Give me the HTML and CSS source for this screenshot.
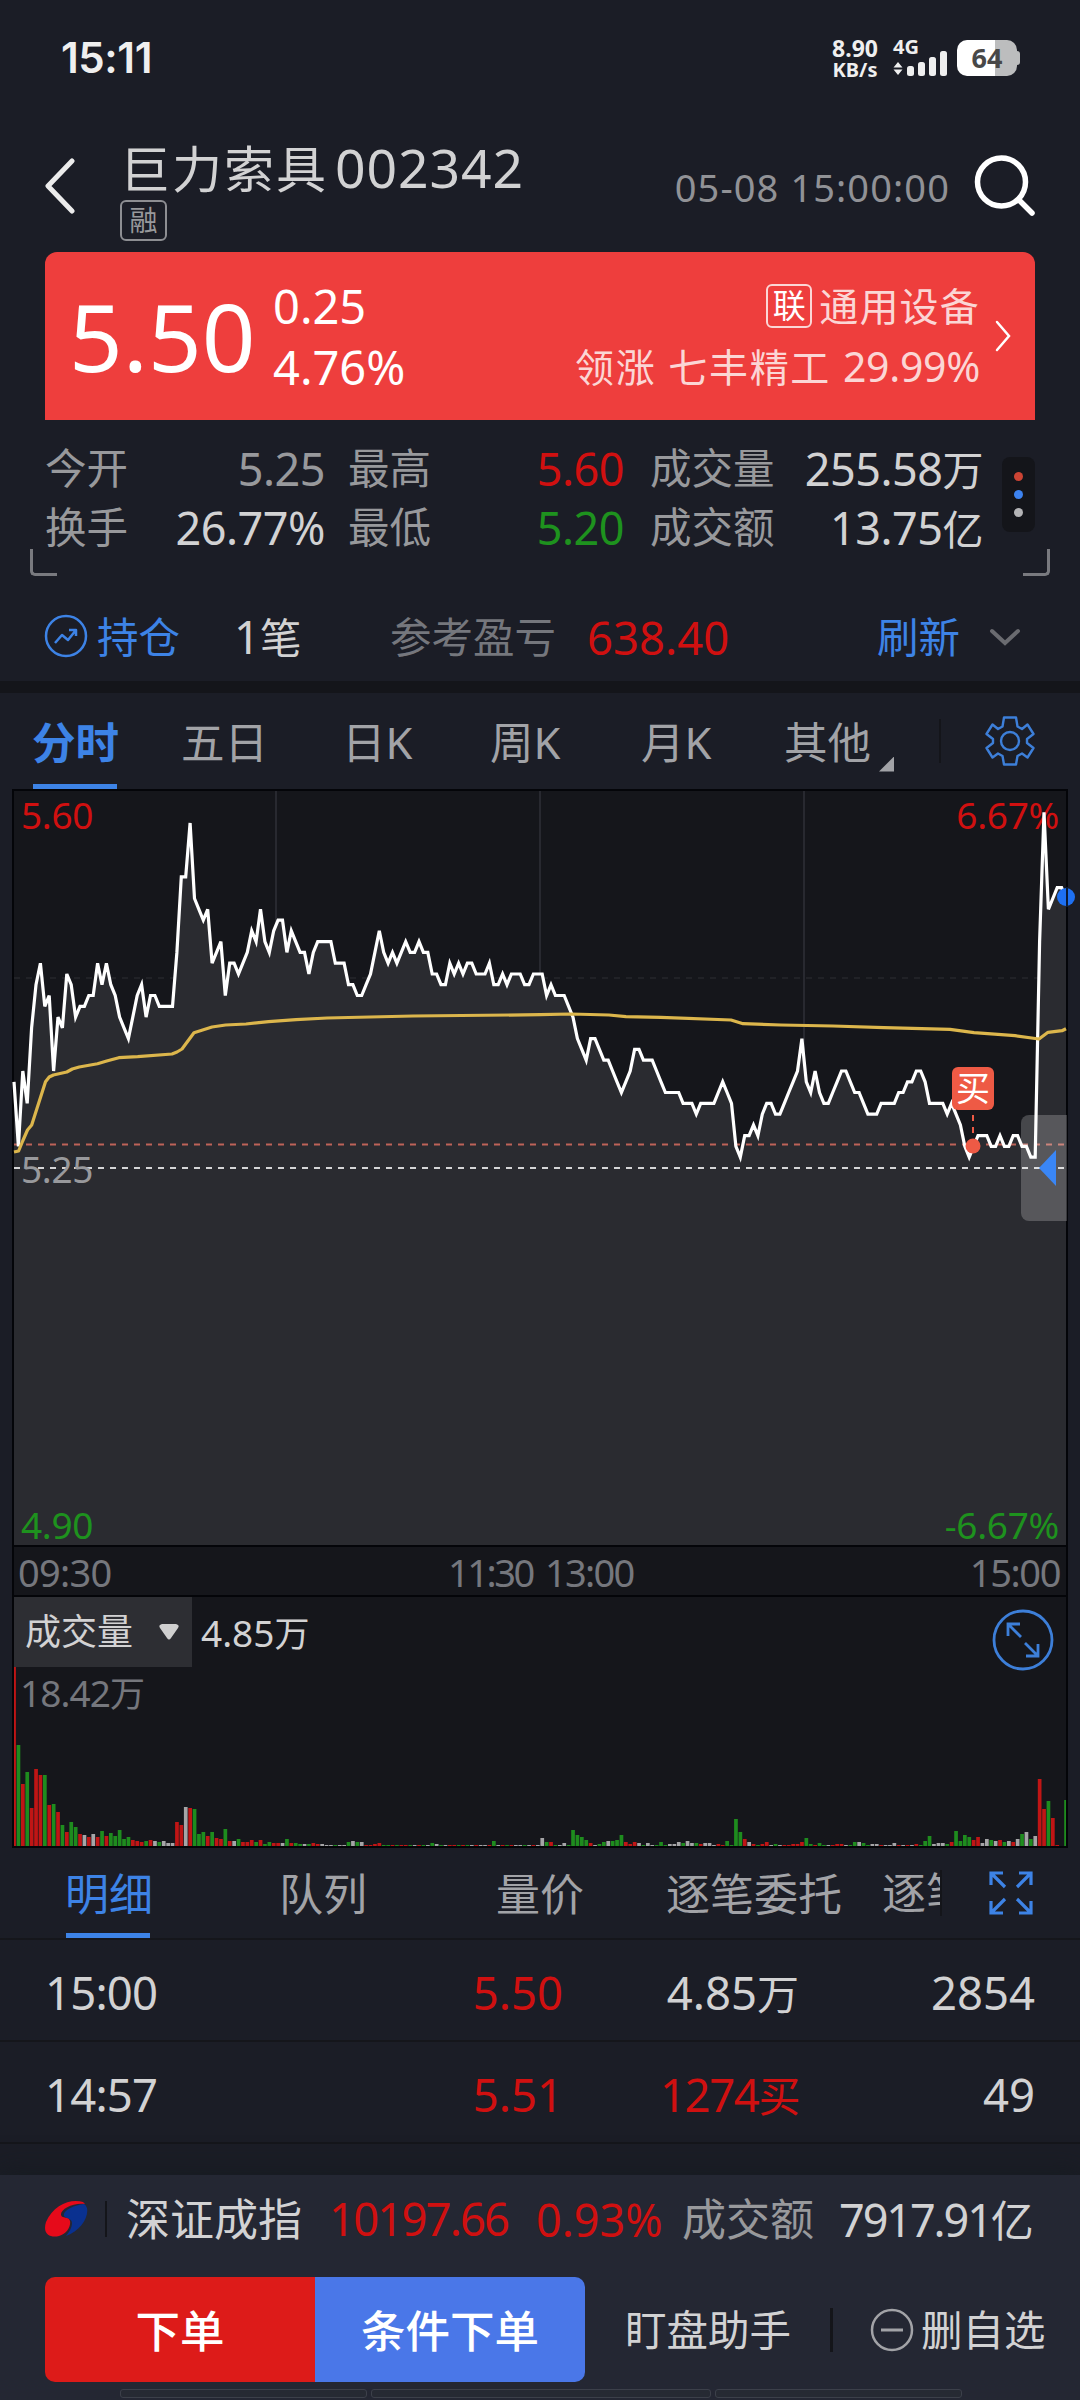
FILE: index.html
```html
<!DOCTYPE html>
<html lang="zh-CN">
<head>
  <meta charset="utf-8">
  <title>巨力索具 002342</title>
  <link rel="stylesheet" href="styles.css">
</head>
<body>
  <div class="statusbar">
    <span class="clock">15:11</span>
    <div class="speed"><span>8.90</span><span class="unit">KB/s</span></div>
    <div class="signal">
      <span>4G</span>
      <svg width="56" height="26" viewBox="0 0 56 26" fill="#efefef">
        <path d="M5 12l4.500 5.500h-9zM5 25l4.500-5.500h-9z"/>
        <rect x="14" y="16" width="7" height="10" rx="2.500"/>
        <rect x="25" y="12" width="7" height="14" rx="2.500"/>
        <rect x="36" y="7" width="7" height="19" rx="2.500"/>
        <rect x="47" y="1" width="7" height="25" rx="2.500"/>
      </svg>
    </div>
    <div class="battery"><span>64</span></div>
  </div>

  <div class="header">
    <svg class="back" width="32" height="56" viewBox="0 0 32 56"><path d="M28 3L4 28l24 25" fill="none" stroke="#ececec" stroke-width="5" stroke-linecap="round" stroke-linejoin="round"/></svg>
    <div class="name">
      <div class="title">巨力索具<span class="code">002342</span></div>
      <span class="tag">融</span>
    </div>
    <span class="date">05-08 15:00:00</span>
    <svg class="search" width="62" height="62" viewBox="0 0 62 62" fill="none" stroke="#fff" stroke-width="5.500" stroke-linecap="round"><circle cx="27.500" cy="27" r="24"/><path d="M45 45l13 13"/></svg>
  </div>

  <div class="quote">
    <span class="price">5.50</span>
    <div class="change"><span>0.25</span><span>4.76%</span></div>
    <div class="sector">
      <div class="sector-name"><span class="lian">联</span>通用设备</div>
      <div class="leader">领涨 七丰精工 <span class="pct">29.99%</span></div>
    </div>
    <svg class="go" width="20" height="34" viewBox="0 0 20 34"><path d="M4 3l12 14L4 31" fill="none" stroke="#fff" stroke-width="2.500" stroke-linecap="round"/></svg>
  </div>

  <div class="stats">
    <div class="stats-grid">
      <span>今开</span><b class="num gray">5.25</b><span>最高</span><b class="num red">5.60</b><span>成交量</span><b class="num">255.58<i>万</i></b>
      <span>换手</span><b class="num">26.77%</b><span>最低</span><b class="num green">5.20</b><span>成交额</span><b class="num">13.75<i>亿</i></b>
    </div>
    <div class="more"><i class="dot d1"></i><i class="dot d2"></i><i class="dot d3"></i></div>
    <i class="corner left"></i><i class="corner right"></i>
  </div>

  <div class="position">
    <svg class="pos-icon" width="44" height="44" viewBox="0 0 44 44" fill="none" stroke="#3d83e6" stroke-width="2.500"><circle cx="22" cy="22" r="20"/><path d="M11 29l7-8 6 5 8-10M25 16h7v6" stroke-linejoin="round"/></svg>
    <span class="hold">持仓</span>
    <span class="count"><em>1</em>笔</span>
    <span class="profit-label">参考盈亏</span>
    <span class="profit">638.40</span>
    <span class="refresh">刷新</span>
    <svg class="down" width="34" height="20" viewBox="0 0 34 20"><path d="M4 4l13 12L30 4" fill="none" stroke="#6a6b70" stroke-width="4" stroke-linecap="round"/></svg>
  </div>

  <div class="tabs">
    <span class="tab active">分时</span>
    <span class="tab">五日</span>
    <span class="tab">日K</span>
    <span class="tab">周K</span>
    <span class="tab">月K</span>
    <span class="tab other">其他</span>
    <i class="triangle"></i>
    <i class="vline"></i>
    <svg class="gear" width="52" height="52" viewBox="-26 -26 52 52" fill="none" stroke="#3d7fd9" stroke-width="2.400" stroke-linejoin="round">
      <path d="M-6-23.500H6L7.500-14.500L12-12L17.500-16.500L23.500-7L17-2V2L23.500 7L17.500 16.500L12 12.500L7.500 15L6 23.500H-6L-7.500 15L-12 12.500L-17.500 16.500L-23.500 7L-17 2V-2L-23.500-7L-17.500-16.500L-12-12L-7.500-14.500Z"/>
      <circle r="9"/>
    </svg>
  </div>

  <div class="chart">
    <svg id="priceChart" width="1052" height="754" viewBox="0 0 1052 754">
      <path d="M262 0V754M526 0V754M790 0V754" stroke="#2f3038" stroke-width="1.500"/>
      <path d="M0 187H1052" stroke="#26272c" stroke-width="1.500" stroke-dasharray="6 6"/>
      <path id="priceArea" fill="#2a2b30"/>
      <path d="M0 353.500H1052" stroke="#bd6358" stroke-width="1.800" stroke-dasharray="6 6"/>
      <path d="M0 377H1052" stroke="#d5d5d7" stroke-width="2" stroke-dasharray="6 6"/>
    </svg>
    <span class="mark top-left red">5.60</span>
    <span class="mark top-right red">6.67%</span>
    <span class="mark middle">5.25</span>
    <span class="mark bottom-left green">4.90</span>
    <span class="mark bottom-right green">-6.67%</span>
    <svg class="lines" width="1052" height="754" viewBox="0 0 1052 754" fill="none">
      <path id="priceLine" stroke="#fff" stroke-width="3.200"/>
      <path stroke="#dcb64c" stroke-width="3.200" stroke-linejoin="round" d="M0 361L4.600 360L8.700 350L13.500 339L17.700 334L31.500 290.700L35.200 286L39.400 284L52.800 281L58.300 278L65.200 276L83.500 272.700L92.700 270L104.800 266.700L123.700 265.700L158 263L163 261L168 258L180 241.700L198 236L211.600 234L232 233L254.600 230.700L282 228.700L313 227L399 225L526 223.700L557 223L595 224L612 225.700L646.500 226.300L717 229L729 232.700L767 234L819 235L870 236.700L936 238.300L960 241.700L1001 244.700L1025 248L1034 241.300L1048 239.700L1052 237.700"/>
      <path d="M959 324v22" stroke="#ee5a45" stroke-width="2" stroke-dasharray="6 6"/>
      <circle cx="959" cy="355" r="7.500" fill="#ee5a45"/>
      <circle cx="1052" cy="106" r="9" fill="#1e70f2"/>
      <path d="M1053 96v20" stroke="#0a1a35" stroke-width="2"/>
    </svg>
    <span class="buy">买</span>
    <div class="drawer"><i></i></div>
  </div>

  <div class="times">
    <span class="t1">09:30</span>
    <span class="t2">11:30</span>
    <span class="t3">13:00</span>
    <span class="t4">15:00</span>
  </div>

  <div class="volume">
    <div class="vol-head">
      <div class="vol-select">成交量<svg width="22" height="18" viewBox="0 0 22 18"><path d="M4 1h14q4 1 2 4l-7 10q-2 3-4 0L2 5Q0 2 4 1z" fill="#d0d0d0"/></svg></div>
      <span class="vol-now">4.85<i>万</i></span>
    </div>
    <span class="vol-max">18.42<i>万</i></span>
    <svg class="bars" id="bars" width="1052" height="249" viewBox="0 0 1052 249"></svg>
    <svg class="expand" width="62" height="62" viewBox="-31 -31 62 62" fill="none" stroke="#3d7fd9" stroke-width="2.800"><circle r="29"/><path d="M-2-3L-15-16M-15-4V-16H-3M2 3L15 16M15 4V16H3"/></svg>
  </div>

  <div class="detail-tabs">
    <span class="dtab active">明细</span>
    <span class="dtab c2">队列</span>
    <span class="dtab c3">量价</span>
    <span class="dtab c4">逐笔委托</span>
    <span class="dtab c5">逐笔</span>
    <svg class="full" width="44" height="44" viewBox="0 0 44 44" fill="none" stroke="#3d83e6" stroke-width="3.200"><path d="M2 14V2h12M2 2l14 14M30 2h12v12M42 2L28 16M2 30v12h12M2 42l14-14M42 30v12H30M42 42L28 28"/></svg>
  </div>
  <div class="row">
    <span class="time">15:00</span><span class="red">5.50</span><span>4.85<i>万</i></span><span>2854</span>
  </div>
  <div class="row">
    <span class="time">14:57</span><span class="red">5.51</span><span class="red tight">1274<i>买</i></span><span>49</span>
  </div>

  <div class="bottom">
    <div class="index">
      <svg class="logo" width="44" height="40" viewBox="0 0 44 40">
        <path d="M40 5C30 6 18 12 20 17c2 3 8 2 8 7 0 5-3 9-6 13C36 32 45 19 43 9Q42 6 40 5z" fill="#0a3190"/>
        <path d="M39 3C27-1 9 6 2 23c-4 13 5 16 13 14 8-2 12-10 11-15-1-5-8-2-9-6C16 10 30 3 41 5Q40 4 39 3z" fill="#e60a1a"/>
      </svg>
      <i class="vline"></i>
      <span class="idx-name">深证成指</span>
      <span class="idx-val red">10197.66</span>
      <span class="idx-pct red">0.93%</span>
      <span class="idx-label">成交额</span>
      <span class="idx-amount">7917.91<i>亿</i></span>
    </div>
    <div class="actions">
      <span class="btn order">下单</span>
      <span class="btn cond">条件下单</span>
      <span class="assist">盯盘助手</span>
      <i class="vline"></i>
      <svg class="minus" width="44" height="44" viewBox="0 0 44 44" fill="none" stroke="#a2a3a7" stroke-width="2.500"><circle cx="22" cy="22" r="20"/><path d="M11 22h22" stroke-width="3"/></svg>
      <span class="remove">删自选</span>
    </div>
    <div class="peek"><i class="p1"></i><i class="p2"></i><i class="p3"></i></div>
  </div>

  <script src="chart.js"></script>
</body>
</html>
```

FILE: styles.css
```css
* {
  box-sizing: border-box;
}

body {
  margin: 0;
  width: 1080px;
  height: 2400px;
  overflow: hidden;
  background: #1b1d26;
  color: #d2d2d3;
  font-family: "Noto Sans", "Noto Sans CJK SC", sans-serif;
  font-size: 41.5px;
  line-height: 1;
  white-space: nowrap;
}

i, em {
  font-style: normal;
}

b {
  font-weight: normal;
}

svg {
  display: block;
  flex: none;
}

.red { color: #d01010 !important; }
.green { color: #1e921e !important; }
.gray { color: #98999c; }

.vline {
  width: 2px;
  height: 44px;
  background: #14151a;
}

/* Status bar */
.statusbar {
  display: flex;
  align-items: flex-start;
  height: 110px;
  padding: 36px 63px 0 61px;
  color: #efefef;
  font-weight: 700;
}

.clock {
  flex: 1;
  font-family: "Inter", sans-serif;
  font-weight: 600;
  font-size: 42px;
  line-height: 44px;
  letter-spacing: -0.4px;
}

.speed {
  display: flex;
  flex-direction: column;
  align-items: center;
  width: 48px;
  margin-right: 14px;
  font-size: 23px;
  line-height: 24px;
}

.speed .unit {
  font-size: 20px;
  line-height: 20px;
}

.signal {
  width: 56px;
  margin-right: 8px;
  font-size: 20px;
}

.signal span {
  display: block;
  height: 14px;
  line-height: 22px;
}

.battery {
  position: relative;
  width: 60px;
  height: 36px;
  margin-top: 4px;
  border-radius: 10px;
  background: linear-gradient(90deg, #fff 38px, #bcbdbe 38px);
  color: #484848;
  font-size: 27px;
  line-height: 36px;
  text-align: center;
}

.battery::after {
  content: "";
  position: absolute;
  right: -3px;
  top: 11px;
  width: 4px;
  height: 14px;
  border-radius: 0 3px 3px 0;
  background: #bcbdbe;
}

/* Header */
.header {
  display: flex;
  align-items: flex-start;
  height: 142px;
  padding: 30px 44px 0 44px;
}

.back {
  margin: 18px 44px 0 0;
}

.name {
  flex: 1;
}

.title {
  height: 60px;
  font-size: 50px;
  line-height: 56px;
  letter-spacing: 2px;
}

.title .code {
  margin-left: 7px;
  font-size: 53.5px;
  letter-spacing: 0.9px;
}

.tag {
  display: block;
  width: 47px;
  height: 41px;
  border: 2px solid #8d8e92;
  border-radius: 6px;
  color: #98999c;
  font-size: 28px;
  line-height: 36px;
  text-align: center;
}

.date {
  margin-right: 24px;
  color: #919296;
  font-size: 38px;
  line-height: 94px;
  letter-spacing: 1.1px;
}

.search {
  margin-top: 15px;
}

/* Quote card */
.quote {
  display: flex;
  align-items: center;
  height: 168px;
  margin: 0 45px;
  padding-right: 22px;
  border-radius: 12px 12px 0 0;
  background: #ee3e3d;
  color: #fff;
}

.price {
  width: 227px;
  padding-left: 24px;
  font-size: 94px;
  line-height: 178px;
}

.change {
  display: flex;
  flex-direction: column;
  flex: 1;
  padding: 2px 0 0 1px;
  font-size: 47px;
  line-height: 61px;
}

.sector {
  display: flex;
  flex-direction: column;
  align-items: flex-end;
  margin-right: 13px;
  color: #fbd6d5;
  font-size: 39px;
  line-height: 61px;
}

.sector-name {
  display: flex;
  align-items: center;
  letter-spacing: 1.2px;
}

.lian {
  width: 46px;
  height: 44px;
  margin-right: 7px;
  border: 2px solid #fbd6d5;
  border-radius: 6px;
  color: #fff;
  font-size: 33px;
  line-height: 39px;
  letter-spacing: 0;
  text-align: center;
}

.leader {
  letter-spacing: 1.7px;
}

.leader .pct {
  font-size: 41px;
  letter-spacing: -0.3px;
}

/* Day stats */
.stats {
  position: relative;
  display: flex;
  height: 158px;
  padding: 19px 45px 0 45px;
}

.stats-grid {
  display: grid;
  grid-template-columns: 100px 180px 110px 189px 130px 229px;
  grid-template-rows: 59px 59px;
  width: 938px;
  line-height: 59px;
  color: #98999c;
}

.stats-grid > :nth-child(6n + 3) { padding-left: 23px; }
.stats-grid > :nth-child(6n + 5) { padding-left: 26px; }

.stats .num {
  font-size: 45px;
  letter-spacing: -0.5px;
  text-align: right;
  color: #d2d2d3;
}

.stats .num.gray { color: #98999c; }

.stats .num i {
  font-size: 41px;
}

.more {
  display: flex;
  flex-direction: column;
  align-items: center;
  justify-content: center;
  gap: 9px;
  width: 33px;
  height: 75px;
  margin: 18px 0 0 19px;
  border-radius: 8px;
  background: #14151a;
}

.dot {
  width: 9px;
  height: 9px;
  border-radius: 50%;
}

.d1 { background: #cc4434; }
.d2 { background: #3d83f0; }
.d3 { background: #b4b4b6; }

.corner {
  position: absolute;
  top: 129px;
  width: 27px;
  height: 27px;
  border-bottom: 3px solid #797a7f;
}

.corner.left {
  left: 30px;
  border-left: 3px solid #797a7f;
  border-radius: 0 0 0 5px;
}

.corner.right {
  right: 30px;
  border-right: 3px solid #797a7f;
  border-radius: 0 0 5px 0;
}

/* Position row */
.position {
  display: flex;
  align-items: center;
  height: 103px;
  padding: 15px 0 0 44px;
  line-height: 60px;
}

.hold {
  width: 137px;
  margin-left: 9px;
  color: #3d83e6;
}

.pos-icon {
  margin-top: -3px;
}

.count {
  width: 156px;
}

.count em,
.profit {
  font-size: 45.5px;
}

.profit-label {
  width: 197px;
  color: #75777d;
}

.profit {
  width: 290px;
  color: #d01010;
}

.refresh {
  width: 111px;
  color: #3d83e6;
}

/* Period tabs */
.tabs {
  display: flex;
  align-items: center;
  height: 108px;
  padding: 0 43px 0 32px;
  border-top: 12px solid #14151a;
  color: #a2a3a7;
  font-size: 43.5px;
}

.tab {
  flex: none;
  width: 86px;
  height: 96px;
  margin-right: 63px;
  line-height: 99px;
}

.tab.active {
  color: #3d83e6;
  font-weight: 600;
  background: linear-gradient(#3d83e6, #3d83e6) 1px 91px / 84px 5px no-repeat;
}

.tab:nth-child(2) { margin-right: 75px; }
.tab:nth-child(3) { width: 68px; margin-right: 80px; }
.tab:nth-child(4) { width: 74px; margin-right: 77px; }
.tab:nth-child(5) { width: 74px; margin-right: 69px; }
.tab.other { margin-right: 9px; }

.triangle {
  width: 15px;
  height: 15px;
  margin-top: 46px;
  background: #a2a3a7;
  clip-path: polygon(100% 0, 100% 100%, 0 100%);
}

.tabs .vline {
  margin-left: 45px;
}

.gear {
  margin-left: 43px;
}

/* Price chart */
.chart {
  position: relative;
  width: 1056px;
  height: 758px;
  margin: 0 12px;
  border: 2px solid #040509;
  background: #15161b;
}

.lines {
  position: absolute;
  left: 0;
  top: 0;
  overflow: visible;
}

.mark {
  position: absolute;
  font-size: 37px;
  line-height: 40px;
  letter-spacing: -0.3px;
}

.top-left { left: 7px; top: 4px; }
.top-right { right: 7px; top: 4px; }
.middle { left: 7px; top: 358px; color: #98999c; }
.bottom-left { left: 7px; bottom: 0; }
.bottom-right { right: 7px; bottom: 0; }

.buy {
  position: absolute;
  left: 938px;
  top: 276px;
  width: 42px;
  height: 43px;
  border-radius: 6px;
  background: #ee5a45;
  color: #fff;
  font-size: 34px;
  line-height: 42px;
  text-align: center;
}

.drawer {
  position: absolute;
  right: -1px;
  top: 324px;
  width: 46px;
  height: 106px;
  border-radius: 8px 0 0 8px;
  background: rgba(255, 255, 255, 0.21);
}

.drawer i {
  display: block;
  width: 17px;
  height: 36px;
  margin: 35px 0 0 18px;
  background: #3a86f5;
  clip-path: polygon(100% 0, 100% 100%, 0 50%);
}

/* Time axis */
.times {
  display: flex;
  width: 1056px;
  height: 48px;
  margin: 0 12px;
  padding: 0 6px 0 4px;
  border: 2px solid #040509;
  border-width: 0 2px;
  background: #15161b;
  color: #75777d;
  font-size: 38px;
  line-height: 50px;
}

.t1 {
  width: 430px;
  letter-spacing: -0.7px;
}

.t2 {
  width: 97px;
  letter-spacing: -2.5px;
}

.t3 {
  flex: 1;
  letter-spacing: -1.7px;
}

.t4 {
  letter-spacing: -1.4px;
}

/* Volume */
.volume {
  position: relative;
  width: 1056px;
  height: 253px;
  margin: 0 12px;
  border: 2px solid #040509;
  background: #15161b;
}

.vol-head {
  display: flex;
}

.vol-select {
  display: flex;
  align-items: center;
  width: 178px;
  height: 70px;
  padding-left: 11px;
  background: #2d2e33;
  font-size: 36px;
  line-height: 70px;
}

.vol-select svg {
  margin-left: 25px;
}

.vol-now {
  margin-left: 9px;
  font-size: 37px;
  line-height: 71px;
}

.vol-now i,
.vol-max i {
  font-size: 35px;
}

.vol-max {
  display: block;
  padding-left: 6px;
  color: #75777d;
  font-size: 37px;
  line-height: 48px;
  letter-spacing: -0.9px;
}

.bars {
  position: absolute;
  left: 0;
  bottom: 0;
}

.expand {
  position: absolute;
  right: 12px;
  top: 12px;
}

/* Detail tabs */
.detail-tabs {
  display: flex;
  align-items: center;
  height: 92px;
  padding: 0 46px 0 65px;
  border-bottom: 2px solid #15161b;
  color: #a2a3a7;
  font-size: 44px;
}

.dtab {
  flex: none;
  width: 88px;
  height: 90px;
  line-height: 93px;
}

.dtab.active {
  color: #3d83e6;
  background: linear-gradient(#3d83e6, #3d83e6) 1px 85px / 84px 5px no-repeat;
}

.dtab.c2 { margin-left: 126px; }
.dtab.c3 { margin-left: 129px; }
.dtab.c4 { width: 178px; margin-left: 82px; }

.dtab.c5 {
  width: 60px;
  height: 46px;
  margin-left: 38px;
  border-right: 2px solid #14151a;
  line-height: 47px;
  overflow: hidden;
}

.full {
  margin-left: 47px;
}

.row {
  display: grid;
  grid-template-columns: 200px 318px 236px 236px;
  height: 102px;
  padding-left: 45px;
  border-bottom: 2px solid #15161b;
  font-size: 45.5px;
  line-height: 104px;
  text-align: right;
}

.row i {
  font-size: 42px;
}

.row .time {
  text-align: left;
  letter-spacing: -0.8px;
}

.row .tight {
  letter-spacing: -1.4px;
}

/* Bottom panel */
.bottom {
  height: 225px;
  margin-top: 31px;
  background: #242733;
  box-shadow: 0 -4px 24px rgba(20, 26, 30, 0.6);
}

.index {
  display: flex;
  align-items: center;
  height: 88px;
  padding-left: 44px;
}

.index .vline {
  height: 36px;
  margin: 0 19px 0 17px;
}

.idx-name {
  width: 203px;
  font-size: 44px;
}

.idx-val {
  width: 207px;
  font-size: 45.5px;
  letter-spacing: -1.9px;
}

.idx-pct {
  width: 146px;
  font-size: 45px;
}

.idx-label {
  width: 157px;
  color: #98999c;
  font-size: 44px;
}

.idx-amount {
  font-size: 45px;
  letter-spacing: -2.1px;
}

.idx-amount i {
  font-size: 43px;
}

.actions {
  display: flex;
  align-items: center;
  height: 105px;
  margin-top: 14px;
  padding-left: 45px;
}

.btn {
  width: 270px;
  height: 105px;
  color: #fff;
  font-size: 44.5px;
  font-weight: 500;
  line-height: 108px;
  text-align: center;
}

.order {
  border-radius: 10px 0 0 10px;
  background: #dd1b19;
}

.cond {
  border-radius: 0 10px 10px 0;
  background: #4a77e8;
}

.assist {
  width: 205px;
  margin-left: 40px;
  line-height: 108px;
}

.actions .vline {
  width: 3px;
}

.minus {
  margin: 0 7px 0 37px;
}

.remove {
  line-height: 108px;
}

.peek {
  display: flex;
  gap: 4px;
  padding: 7px 0 0 120px;
}

.peek i {
  height: 9px;
  border: 1px solid #3c404a;
  border-radius: 3px;
  background: #262a33;
}

.p1,
.p3 {
  width: 247px;
}

.p2 {
  width: 340px;
}
```

FILE: chart.js
```javascript
// one value per minute, in cents above the previous close
const prices = [
  8,2,9,6,13,17,19,15,16,9,14,13,18,17,14,15,15,16,16,19,17,19,17,16,14,13,12,14,16,17,
  14,16,16,15,15,15,15,20,27,27,32,25,24,23,24,19,20,21,16,19,19,18,19,20,22,21,24,21,20,22,
  23,23,20,22,21,20,20,18,20,21,21,21,21,19,19,19,17,17,16,16,17,18,20,22,20,19,20,19,20,21,
  20,20,21,20,20,18,18,17,17,19,18,19,18,19,19,18,18,18,19,17,17,18,17,18,18,18,17,17,18,18,
  18,16,17,16,16,16,15,14,12,11,10,12,12,11,10,10,9,8,7,8,9,11,11,10,10,10,9,8,7,7,
  7,7,6,6,6,5,6,6,6,6,7,8,7,6,2,1,3,3,4,3,5,6,6,5,5,6,7,8,9,12,
  8,7,9,7,6,6,7,8,9,9,8,7,7,6,5,5,5,6,6,6,6,7,7,8,8,9,9,8,6,6,
  6,6,5,6,5,4,2,1,2,3,3,3,2,2,3,2,2,3,3,2,2,1,1,21,33,24,25,26,26,25
];

// colour and height of each volume bar
const volumes = `r179 g101 r62 g74 r38 r77 r71 g71 r41 g42 r34 g21 r14 g24 g19 r12 w11 r9 w12 r9
g15 r10 g13 g10 g16 g7 g9 r6 r5 r4 g5 r6 w5 g4 w5 w3 w3 r24 r21 w39 r38 g37 g12 g14 r10 g14 r8 r7 g17 r5
w5 g7 r4 r4 r6 g4 r6 g2 g4 r3 r3 w3 g7 r3 g3 g2 w2 g2 r3 r2 w2 w1 w1 g1 w1 w1 g4 w5 g4 w4
r1 r1 r2 r3 g1 g1 r1 g1 r1 r1 g1 w1 r1 g1 w1 g3 w2 g1 w1 r1 r1 g1 r1 g1 w1 r1 w1 w1 r1 g5
w1 r1 g1 r1 w1 w1 g1 w1 r1 w1 w8 g4 r4 g1 w1 w3 g1 g16 g11 g9 g6 r3 w1 g2 g4 w5 g5 g6 g11 r4
r2 r4 w3 g1 w3 w1 g1 g4 g1 w2 w2 w4 g3 w5 w3 g3 r2 w3 w3 w1 r2 r1 g5 g1 g27 g14 r7 w4 r2 g1
r2 r4 w1 g2 w1 r1 r1 r2 r2 r4 g8 g2 r1 g3 g1 w1 r1 r2 r2 w1 g1 g4 w4 g3 g1 w2 w2 r1 w1 w1
w3 r1 w1 r1 w1 r2 g1 g5 g10 w2 w3 w3 g2 r4 g15 g5 g11 g9 r6 r9 w3 w7 g6 w5 r6 g4 w5 r4 w7 g12
w14 g7 w10 r67 r37 g45 r28 r1 r0 g46`.split(/\s+/);

const colors = { r: '#c01515', g: '#1e8c1e', w: '#a5a5a7' };
const step = 1052 / 239;

const points = prices.map((p, i) => `${(i * step).toFixed(1)} ${(377 - p * 10.78).toFixed(1)}`);
const line = 'M' + points.join('L');

document.getElementById('priceLine').setAttribute('d', line);
document.getElementById('priceArea').setAttribute('d', line + 'V754H0Z');

document.getElementById('bars').innerHTML = volumes.map((v, i) => {
  const h = Number(v.slice(1));
  return `<rect x="${(i * step - 1.8).toFixed(1)}" y="${249 - h}" width="3.7" height="${h}" fill="${colors[v[0]]}"/>`;
}).join('');
```
